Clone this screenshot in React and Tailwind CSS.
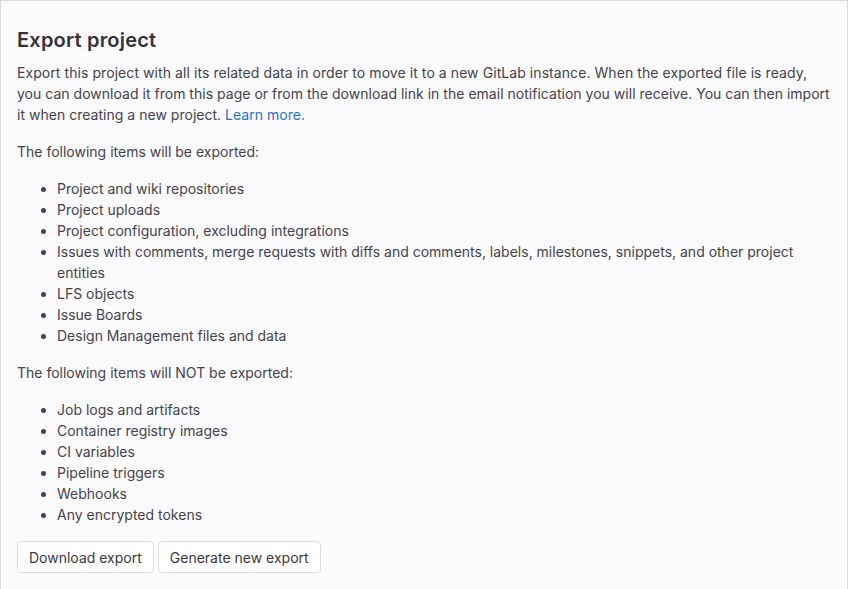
export default function App() {
  const exported = [
    'Project and wiki repositories',
    'Project uploads',
    'Project configuration, excluding integrations',
    'Issues with comments, merge requests with diffs and comments, labels, milestones, snippets, and other project entities',
    'LFS objects',
    'Issue Boards',
    'Design Management files and data',
  ];
  const notExported = [
    'Job logs and artifacts',
    'Container registry images',
    'CI variables',
    'Pipeline triggers',
    'Webhooks',
    'Any encrypted tokens',
  ];

  return (
    <div className="min-h-[589px] bg-white" style={{ fontFamily: 'Inter, "Noto Sans", sans-serif' }}>
      <div className="min-h-[600px] bg-[#fbfafd] border-l border-t border-r border-[#dcdcde] px-4 pt-[27px] text-[14px] leading-[21px] text-[#45434b]">
        <h4 className="text-[20px] leading-[24px] font-semibold text-[#333238] mb-[10px] tracking-[0.2px]">Export project</h4>
        <p className="mb-4 tracking-[0.02px]">
          <span className="tracking-[0.07px]">Export this project with all its related data in order to move it to a new GitLab instance. When the exported file is ready,</span>{' '}
          you can download it from this page or from the download link in the email notification you will receive. You can then import it when creating a new project.{' '}
          <a href="#" className="text-[#1f75cb]">Learn more.</a>
        </p>
        <p className="mb-4">The following items will be exported:</p>
        <ul className="list-disc pl-10 mb-4 pr-4">
          {exported.map((t) => (
            <li key={t}>{t}</li>
          ))}
        </ul>
        <p className="mb-4">The following items will NOT be exported:</p>
        <ul className="list-disc pl-10 mb-4">
          {notExported.map((t) => (
            <li key={t}>{t}</li>
          ))}
        </ul>
        <div className="flex gap-1">
          <button className="h-8 px-[11px] bg-white border border-[#dcdcde] rounded text-[14px] text-[#3a383f]">Download export</button>
          <button className="h-8 px-[11px] bg-white border border-[#dcdcde] rounded text-[14px] text-[#3a383f]">Generate new export</button>
        </div>
      </div>
    </div>
  );
}
